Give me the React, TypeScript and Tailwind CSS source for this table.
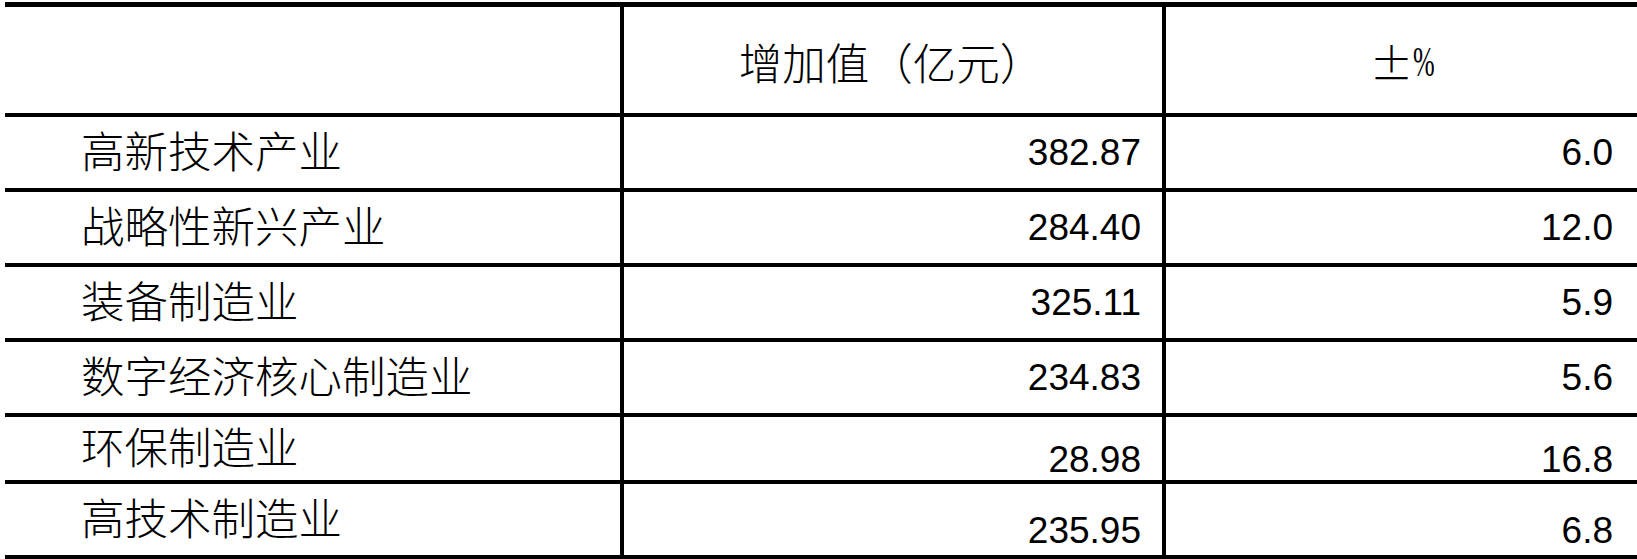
import React from "react";

const cjk = "font-['Noto_Sans_CJK_SC','Noto_Sans_CJK_SC',sans-serif]";
const num = "font-['Liberation_Sans',Arial,sans-serif]";

type Row = { label: string; value: string; pct: string; h: string; align: string };

const rows: Row[] = [
  { label: "高新技术产业", value: "382.87", pct: "6.0", h: "h-[71px]", align: "items-center" },
  { label: "战略性新兴产业", value: "284.40", pct: "12.0", h: "h-[71px]", align: "items-center" },
  { label: "装备制造业", value: "325.11", pct: "5.9", h: "h-[71px]", align: "items-center" },
  { label: "数字经济核心制造业", value: "234.83", pct: "5.6", h: "h-[71px]", align: "items-center" },
  { label: "环保制造业", value: "28.98", pct: "16.8", h: "h-[63px]", align: "items-end pb-[2px]" },
  { label: "高技术制造业", value: "235.95", pct: "6.8", h: "h-[71px]", align: "items-end pb-[6px]" },
];

export default function App() {
  return (
    <div className="w-[1637px] h-[559px] bg-white overflow-hidden pt-[2px] pl-[5px]">
      <div className="grid grid-cols-[615px_538px_471px] gap-[4px] bg-black pt-[5px] pb-[4px]">
        <div className="bg-white h-[106px]" />
        <div className={`bg-white h-[106px] flex items-center justify-center pr-[4px] pt-[4px] text-[43.5px] leading-none text-black ${cjk} font-light`}>
          增加值（亿元）
        </div>
        <div className={`bg-white h-[106px] flex items-center justify-center pt-[4px] pl-[6px] text-[43.5px] leading-none text-black ${cjk} font-light`}>
          <span>±</span>
          <span className="inline-block w-[26px] scale-x-[0.62] origin-left font-['Liberation_Serif',serif] text-[42px]">%</span>
        </div>
        {rows.map((r) => (
          <React.Fragment key={r.label}>
            <div className={`bg-white ${r.h} flex items-center pl-[76px] pb-[6px] text-[43.5px] leading-none text-black ${cjk} font-light`}>
              {r.label}
            </div>
            <div className={`bg-white ${r.h} flex ${r.align} justify-end pr-[21px] text-[37px] leading-none text-black ${num}`}>
              {r.value}
            </div>
            <div className={`bg-white ${r.h} flex ${r.align} justify-end pr-[24px] text-[37px] leading-none text-black ${num}`}>
              {r.pct}
            </div>
          </React.Fragment>
        ))}
      </div>
    </div>
  );
}
